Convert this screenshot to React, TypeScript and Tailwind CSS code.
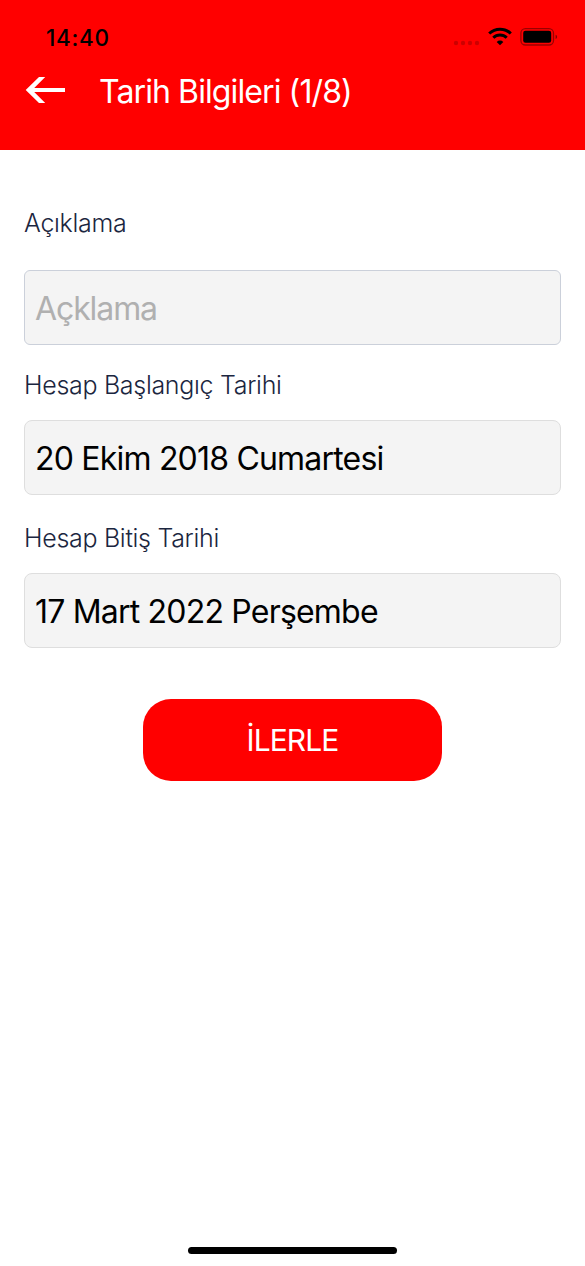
import { useState } from "react";

function StatusBar() {
  return (
    <div className="flex h-[50px] items-center justify-between pl-[46px] pr-[27px] pt-6">
      <span className="pt-px text-[22.5px] leading-7 font-medium tracking-[0.7px] text-black">14:40</span>
      <div className="flex items-center">
        <svg width="28" height="24" viewBox="0 0 28 24" fill="#000" fillOpacity="0.2">
          <circle cx="3" cy="18" r="2.2" />
          <circle cx="10" cy="18" r="2.2" />
          <circle cx="17" cy="18" r="2.2" />
          <circle cx="24" cy="18" r="2.2" />
        </svg>
        <svg className="ml-[7px]" width="24" height="24" viewBox="0 0 24 24" fill="none" stroke="#000" strokeWidth="3">
          <path d="M1.2 8.5a15.6 15.6 0 0 1 21.6 0" />
          <path d="M5.3 12.8a9.6 9.6 0 0 1 13.4 0" />
          <path d="M12 20.2l-3.3-3.3a4.7 4.7 0 0 1 6.6 0z" fill="#000" stroke="none" />
        </svg>
        <svg className="ml-[8px]" width="38" height="24" viewBox="0 0 38 24">
          <rect x="0.9" y="3.6" width="32.6" height="16.4" rx="4.5" fill="none" stroke="#000" strokeOpacity="0.4" strokeWidth="1.3" />
          <rect x="3.2" y="5.8" width="28" height="12" rx="2.3" />
          <path d="M35.6 9.8q1.5.6 1.5 2.1T35.6 14z" fillOpacity="0.5" />
        </svg>
      </div>
    </div>
  );
}

function Header() {
  return (
    <header className="h-[150px] bg-[#ff0000]">
      <StatusBar />
      <div className="flex h-20 items-center pl-[25px]">
        <button type="button" aria-label="Geri">
          <svg width="42" height="30" viewBox="0 0 42 30" fill="#fff">
            <path d="M0.7 15L14 2h6.2L9.2 13H40v4H9.2l11 11H14z" />
          </svg>
        </button>
        <h1 className="ml-8 pt-[3px] text-[32px] leading-10 tracking-[-0.9px] text-white">
          Tarih Bilgileri (1/8)
        </h1>
      </div>
    </header>
  );
}

function DateField({ label, value }: { label: string; value: string }) {
  return (
    <div>
      <p className="text-[25px] leading-8 font-light tracking-[-0.3px] text-[#1b2640]">{label}</p>
      <button
        type="button"
        className="mt-[19px] flex h-[75px] w-full items-center rounded-lg border border-[#dedede] bg-[#f4f4f4] px-[10px] pt-[3px] text-[32px] tracking-[-0.8px] text-black"
      >
        {value}
      </button>
    </div>
  );
}

export default function App() {
  const [description, setDescription] = useState("");

  return (
    <div className="flex h-[1266px] w-full flex-col bg-white font-['Inter','Liberation_Sans',sans-serif]">
      <Header />
      <form className="flex flex-1 flex-col px-6 pt-[57px]" onSubmit={(e) => e.preventDefault()}>
        <label htmlFor="description" className="text-[25px] leading-8 font-light tracking-[-0.3px] text-[#1b2640]">
          Açıklama
        </label>
        <input
          id="description"
          type="text"
          placeholder="Açklama"
          value={description}
          onChange={(e) => setDescription(e.target.value)}
          className="mt-[31px] h-[75px] w-full rounded-md border border-[#cbd0da] bg-[#f4f4f4] px-[10px] pt-px text-[32px] tracking-[-1.1px] text-black placeholder:text-[#b0b0b0]"
        />
        <div className="mt-6 flex flex-col gap-[27px]">
          <DateField label="Hesap Başlangıç Tarihi" value="20 Ekim 2018 Cumartesi" />
          <DateField label="Hesap Bitiş Tarihi" value="17 Mart 2022 Perşembe" />
        </div>
        <button
          type="submit"
          className="mt-[51px] h-[82px] w-[299px] self-center rounded-[28px] bg-[#ff0000] text-[30px] tracking-[-0.9px] text-white"
        >
          İLERLE
        </button>
      </form>
      <div className="mb-[12px] h-[7px] w-[209px] self-center rounded-full bg-black" />
    </div>
  );
}
